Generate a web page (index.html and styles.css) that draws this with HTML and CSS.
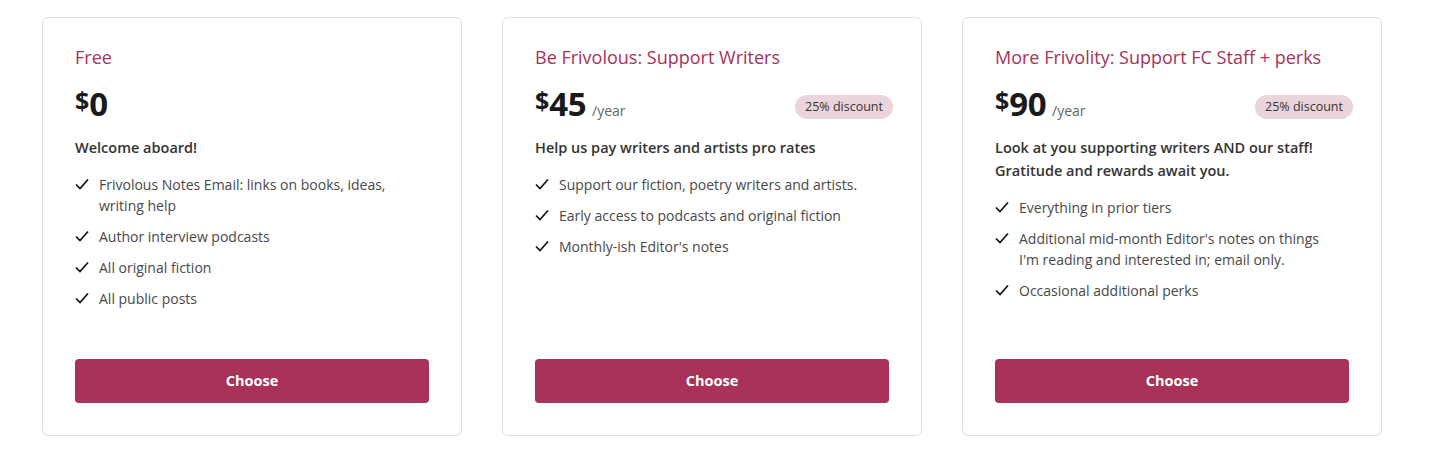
FILE: index.html
```html
<!DOCTYPE html>
<html>
<head>
<meta charset="utf-8">
<link rel="stylesheet" href="styles.css">
</head>
<body>
<div class="tiers">
  <div class="card">
    <div class="title">Free</div>
    <div class="price-row">
      <div class="price"><span class="cur">$</span><span class="amt">0</span></div>
    </div>
    <div class="desc">Welcome aboard!</div>
    <ul class="features">
      <li><svg class="check" viewBox="0 0 14 12"><path d="M1 6.5 L5 10.5 L13 1.5"/></svg><span>Frivolous Notes Email: links on books, ideas, writing help</span></li>
      <li><svg class="check" viewBox="0 0 14 12"><path d="M1 6.5 L5 10.5 L13 1.5"/></svg><span>Author interview podcasts</span></li>
      <li><svg class="check" viewBox="0 0 14 12"><path d="M1 6.5 L5 10.5 L13 1.5"/></svg><span>All original fiction</span></li>
      <li><svg class="check" viewBox="0 0 14 12"><path d="M1 6.5 L5 10.5 L13 1.5"/></svg><span>All public posts</span></li>
    </ul>
    <button class="choose">Choose</button>
  </div>
  <div class="card">
    <div class="title">Be Frivolous: Support Writers</div>
    <div class="price-row">
      <div class="price"><span class="cur">$</span><span class="amt">45</span><span class="per">/year</span></div>
      <span class="badge">25% discount</span>
    </div>
    <div class="desc">Help us pay writers and artists pro rates</div>
    <ul class="features">
      <li><svg class="check" viewBox="0 0 14 12"><path d="M1 6.5 L5 10.5 L13 1.5"/></svg><span>Support our fiction, poetry writers and artists.</span></li>
      <li><svg class="check" viewBox="0 0 14 12"><path d="M1 6.5 L5 10.5 L13 1.5"/></svg><span>Early access to podcasts and original fiction</span></li>
      <li><svg class="check" viewBox="0 0 14 12"><path d="M1 6.5 L5 10.5 L13 1.5"/></svg><span>Monthly-ish Editor's notes</span></li>
    </ul>
    <button class="choose">Choose</button>
  </div>
  <div class="card">
    <div class="title">More Frivolity: Support FC Staff + perks</div>
    <div class="price-row">
      <div class="price"><span class="cur">$</span><span class="amt">90</span><span class="per">/year</span></div>
      <span class="badge">25% discount</span>
    </div>
    <div class="desc">Look at you supporting writers AND our staff! Gratitude and rewards await you.</div>
    <ul class="features">
      <li><svg class="check" viewBox="0 0 14 12"><path d="M1 6.5 L5 10.5 L13 1.5"/></svg><span>Everything in prior tiers</span></li>
      <li><svg class="check" viewBox="0 0 14 12"><path d="M1 6.5 L5 10.5 L13 1.5"/></svg><span>Additional mid-month Editor's notes on things I'm reading and interested in; email only.</span></li>
      <li><svg class="check" viewBox="0 0 14 12"><path d="M1 6.5 L5 10.5 L13 1.5"/></svg><span>Occasional additional perks</span></li>
    </ul>
    <button class="choose">Choose</button>
  </div>
</div>
</body>
</html>
```
FILE: styles.css
```css
* { box-sizing: border-box; }
html, body { margin: 0; padding: 0; background: #fff; }
body {
  font-family: "Open Sans", "Noto Sans", sans-serif;
  color: #333;
}
.tiers {
  display: flex;
  gap: 40px;
  padding: 17px 0 0 42px;
}
.card {
  width: 420px;
  height: 419px;
  border: 1px solid #e0e0e0;
  border-radius: 6px;
  padding: 28px 32px 32px;
  display: flex;
  flex-direction: column;
}
.title {
  color: #a8325a;
  font-size: 18px;
  font-weight: 500;
  line-height: 22px;
}
.price-row {
  display: flex;
  align-items: center;
  justify-content: space-between;
  margin-top: 12px;
  height: 48px;
}
.price {
  display: flex;
  align-items: baseline;
  color: #1a1a1a;
  font-weight: 700;
}
.cur {
  font-size: 25px;
  align-self: flex-start;
  margin-top: 8px;
  line-height: 24px;
}
.amt {
  font-size: 33px;
  line-height: 48px;
  letter-spacing: -0.5px;
}
.per {
  font-weight: 400;
  color: #666;
  font-size: 14px;
  margin-left: 6px;
}
.badge {
  background: #ecd4dc;
  color: #333;
  font-size: 12.5px;
  line-height: 24px;
  padding: 0 10px;
  border-radius: 12px;
  margin-top: 6px;
  margin-right: -4px;
}
.desc {
  margin-top: 8px;
  font-size: 14.5px;
  font-weight: 600;
  color: #333;
  line-height: 23px;
}
.features {
  list-style: none;
  margin: 15px 0 0;
  padding: 0;
  flex: 1;
  display: flex;
  flex-direction: column;
  gap: 10px;
}
.features li {
  display: flex;
  gap: 10px;
  font-size: 14px;
  line-height: 21px;
  color: #484848;
  padding-right: 12px;
}
.check {
  flex: none;
  width: 14px;
  height: 12px;
  margin-top: 4px;
  fill: none;
  stroke: #111;
  stroke-width: 1.7;
}
.choose {
  display: block;
  width: 100%;
  height: 44px;
  border: none;
  border-radius: 4px;
  background: #a83258;
  color: #fff;
  font-family: inherit;
  font-size: 14.5px;
  font-weight: 700;
  padding-bottom: 2px;
}
```
